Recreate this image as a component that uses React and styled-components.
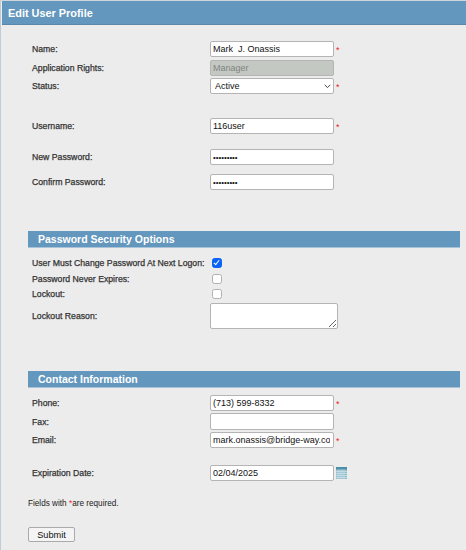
import React from "react";
import styled, { createGlobalStyle } from "styled-components";

const GlobalStyle = createGlobalStyle`
  html, body {
    margin: 0;
    padding: 0;
    background: #ececec;
  }
  body {
    font-family: "Liberation Sans", Arial, sans-serif;
    overflow: hidden;
  }
`;

const Page = styled.div`
  width: 466px;
  height: 550px;
  box-sizing: border-box;
  border-left: 1px solid #c3ccd6;
  border-top: 1px solid #cfd6dd;
  padding-left: 1px;
  background: #ececec;
  overflow: hidden;
`;

const TitleBar = styled.div`
  height: 24px;
  box-sizing: border-box;
  display: flex;
  align-items: center;
  padding-left: 6px;
  background: #6497bd;
  border-bottom: 1px solid #5b88aa;
  color: #fff;
  font-size: 10.9px;
  font-weight: bold;
`;

const Form = styled.form`
  padding: 16px 6px 0 26px;
`;

const Row = styled.div`
  display: grid;
  grid-template-columns: 182px auto;
  justify-content: start;
  align-items: center;
  height: ${({ $height }) => $height || 16}px;
  margin-top: ${({ $top }) => $top || 0}px;
`;

const Label = styled.label`
  padding-left: 4px;
  color: #333;
  font-size: 8.7px;
  -webkit-text-stroke: 0.25px #333;
  white-space: nowrap;
`;

const Field = styled.div`
  display: flex;
  align-items: center;
  gap: 2px;
`;

const TextInput = styled.input`
  width: 124px;
  height: ${({ $tall }) => ($tall ? 17 : 16)}px;
  box-sizing: border-box;
  margin: 0;
  padding: 0 3px 0 2px;
  border: 1px solid #b4b4b4;
  border-radius: 2px;
  background: #fff;
  color: #111;
  font-family: "Liberation Sans", Arial, sans-serif;
  font-size: 9px;
  outline: none;

  &:disabled {
    background: #c4c8c3;
    color: #808580;
    opacity: 1;
  }
`;

const PasswordInput = styled(TextInput)`
  font-size: 7.8px;
`;

const SelectWrap = styled.div`
  position: relative;
  display: flex;
`;

const Select = styled.select`
  appearance: none;
  width: 124px;
  height: 16px;
  box-sizing: border-box;
  margin: 0;
  padding: 0 0 0 4px;
  border: 1px solid #b4b4b4;
  border-radius: 2px;
  background: #fff;
  color: #111;
  font-family: "Liberation Sans", Arial, sans-serif;
  font-size: 9px;
  outline: none;
`;

const Chevron = styled.svg`
  position: absolute;
  top: 6px;
  right: 3px;
  pointer-events: none;
`;

const Required = styled.span`
  align-self: flex-start;
  padding-top: 5px;
  color: #e8262a;
  font-size: 9px;
  line-height: 1;
`;

const NoteStar = styled.span`
  color: #e8262a;
`;

const SectionBar = styled.div`
  height: 17px;
  box-sizing: border-box;
  display: flex;
  align-items: center;
  margin-top: ${({ $top }) => $top}px;
  padding-left: 10px;
  background: #6497bd;
  border-bottom: 1px solid #a9c3d8;
  color: #fff;
  font-size: 10.5px;
  font-weight: bold;
`;

const Checkbox = styled.input.attrs({ type: "checkbox" })`
  appearance: none;
  position: relative;
  width: 10px;
  height: 10px;
  box-sizing: border-box;
  margin: 0 0 0 2px;
  border: 1px solid #b0b0b0;
  border-radius: 2.5px;
  background: #fff;
  outline: none;

  &:checked {
    border-color: #0b63f6;
    background: #0b63f6;
  }

  &:checked::after {
    content: "";
    position: absolute;
    left: 2.4px;
    top: 0.2px;
    width: 2.4px;
    height: 5px;
    border: solid #fff;
    border-width: 0 1.3px 1.3px 0;
    transform: rotate(40deg);
  }
`;

const ReasonBox = styled.textarea`
  display: block;
  width: 128px;
  height: 26px;
  box-sizing: border-box;
  margin: 0;
  padding: 2px;
  border: 1px solid #b4b4b4;
  border-radius: 2px;
  background: #fff;
  outline: none;
`;

const Note = styled.p`
  margin: 18px 0 0;
  color: #222;
  font-size: 8.2px;
`;

const SubmitButton = styled.button`
  display: block;
  width: 47px;
  height: 15px;
  box-sizing: border-box;
  margin: 19px 0 0;
  padding: 0;
  border: 1px solid #aaa;
  border-radius: 2px;
  background: #f4f4f4;
  color: #111;
  font-family: "Liberation Sans", Arial, sans-serif;
  font-size: 9.2px;
`;

const CalendarIcon = () => (
  <svg width="11" height="12" viewBox="0 0 11 12" aria-hidden="true">
    <rect x="0" y="0" width="11" height="12" fill="#8fbccd" />
    <rect x="0" y="0" width="11" height="2.5" fill="#4d8fa8" />
    <path
      d="M0 4.5H11M0 6.5H11M0 8.5H11M0 10.5H11M2 2.5V12M4 2.5V12M6 2.5V12M8 2.5V12"
      stroke="#c9e0e9"
      strokeWidth="0.8"
      fill="none"
    />
  </svg>
);

const App = () => {
  return (
    <Page>
      <GlobalStyle />
      <TitleBar>Edit User Profile</TitleBar>
      <Form onSubmit={(e) => e.preventDefault()}>
        <Row>
          <Label>Name:</Label>
          <Field>
            <TextInput defaultValue="Mark  J. Onassis" />
            <Required>*</Required>
          </Field>
        </Row>
        <Row $top={3}>
          <Label>Application Rights:</Label>
          <Field>
            <TextInput defaultValue="Manager" disabled />
          </Field>
        </Row>
        <Row $top={2}>
          <Label>Status:</Label>
          <Field>
            <SelectWrap>
              <Select defaultValue="Active">
                <option>Active</option>
                <option>Inactive</option>
              </Select>
              <Chevron width="7" height="5" viewBox="0 0 7 5" aria-hidden="true">
                <path d="M0.7 0.8L3.5 3.6L6.3 0.8" stroke="#333" strokeWidth="0.9" fill="none" />
              </Chevron>
            </SelectWrap>
            <Required>*</Required>
          </Field>
        </Row>
        <Row $top={24}>
          <Label>Username:</Label>
          <Field>
            <TextInput defaultValue="116user" />
            <Required>*</Required>
          </Field>
        </Row>
        <Row $top={15}>
          <Label>New Password:</Label>
          <Field>
            <PasswordInput type="password" defaultValue="password1" />
          </Field>
        </Row>
        <Row $top={9}>
          <Label>Confirm Password:</Label>
          <Field>
            <PasswordInput type="password" defaultValue="password1" />
          </Field>
        </Row>

        <SectionBar $top={41}>Password Security Options</SectionBar>
        <Row $top={8} $height={14}>
          <Label>User Must Change Password At Next Logon:</Label>
          <Field>
            <Checkbox defaultChecked />
          </Field>
        </Row>
        <Row $top={1.5} $height={14}>
          <Label>Password Never Expires:</Label>
          <Field>
            <Checkbox />
          </Field>
        </Row>
        <Row $top={1.5} $height={14}>
          <Label>Lockout:</Label>
          <Field>
            <Checkbox />
          </Field>
        </Row>
        <Row $top={2} $height={26}>
          <Label>Lockout Reason:</Label>
          <Field>
            <ReasonBox />
          </Field>
        </Row>

        <SectionBar $top={42}>Contact Information</SectionBar>
        <Row $top={7}>
          <Label>Phone:</Label>
          <Field>
            <TextInput defaultValue="(713) 599-8332" />
            <Required>*</Required>
          </Field>
        </Row>
        <Row $top={2} $height={17}>
          <Label>Fax:</Label>
          <Field>
            <TextInput $tall />
          </Field>
        </Row>
        <Row $top={2}>
          <Label>Email:</Label>
          <Field>
            <TextInput defaultValue="mark.onassis@bridge-way.com" />
            <Required>*</Required>
          </Field>
        </Row>
        <Row $top={17}>
          <Label>Expiration Date:</Label>
          <Field>
            <TextInput defaultValue="02/04/2025" />
            <CalendarIcon />
          </Field>
        </Row>

        <Note>
          Fields with <NoteStar>*</NoteStar>are required.
        </Note>
        <SubmitButton type="submit">Submit</SubmitButton>
      </Form>
    </Page>
  );
};

export default App;
